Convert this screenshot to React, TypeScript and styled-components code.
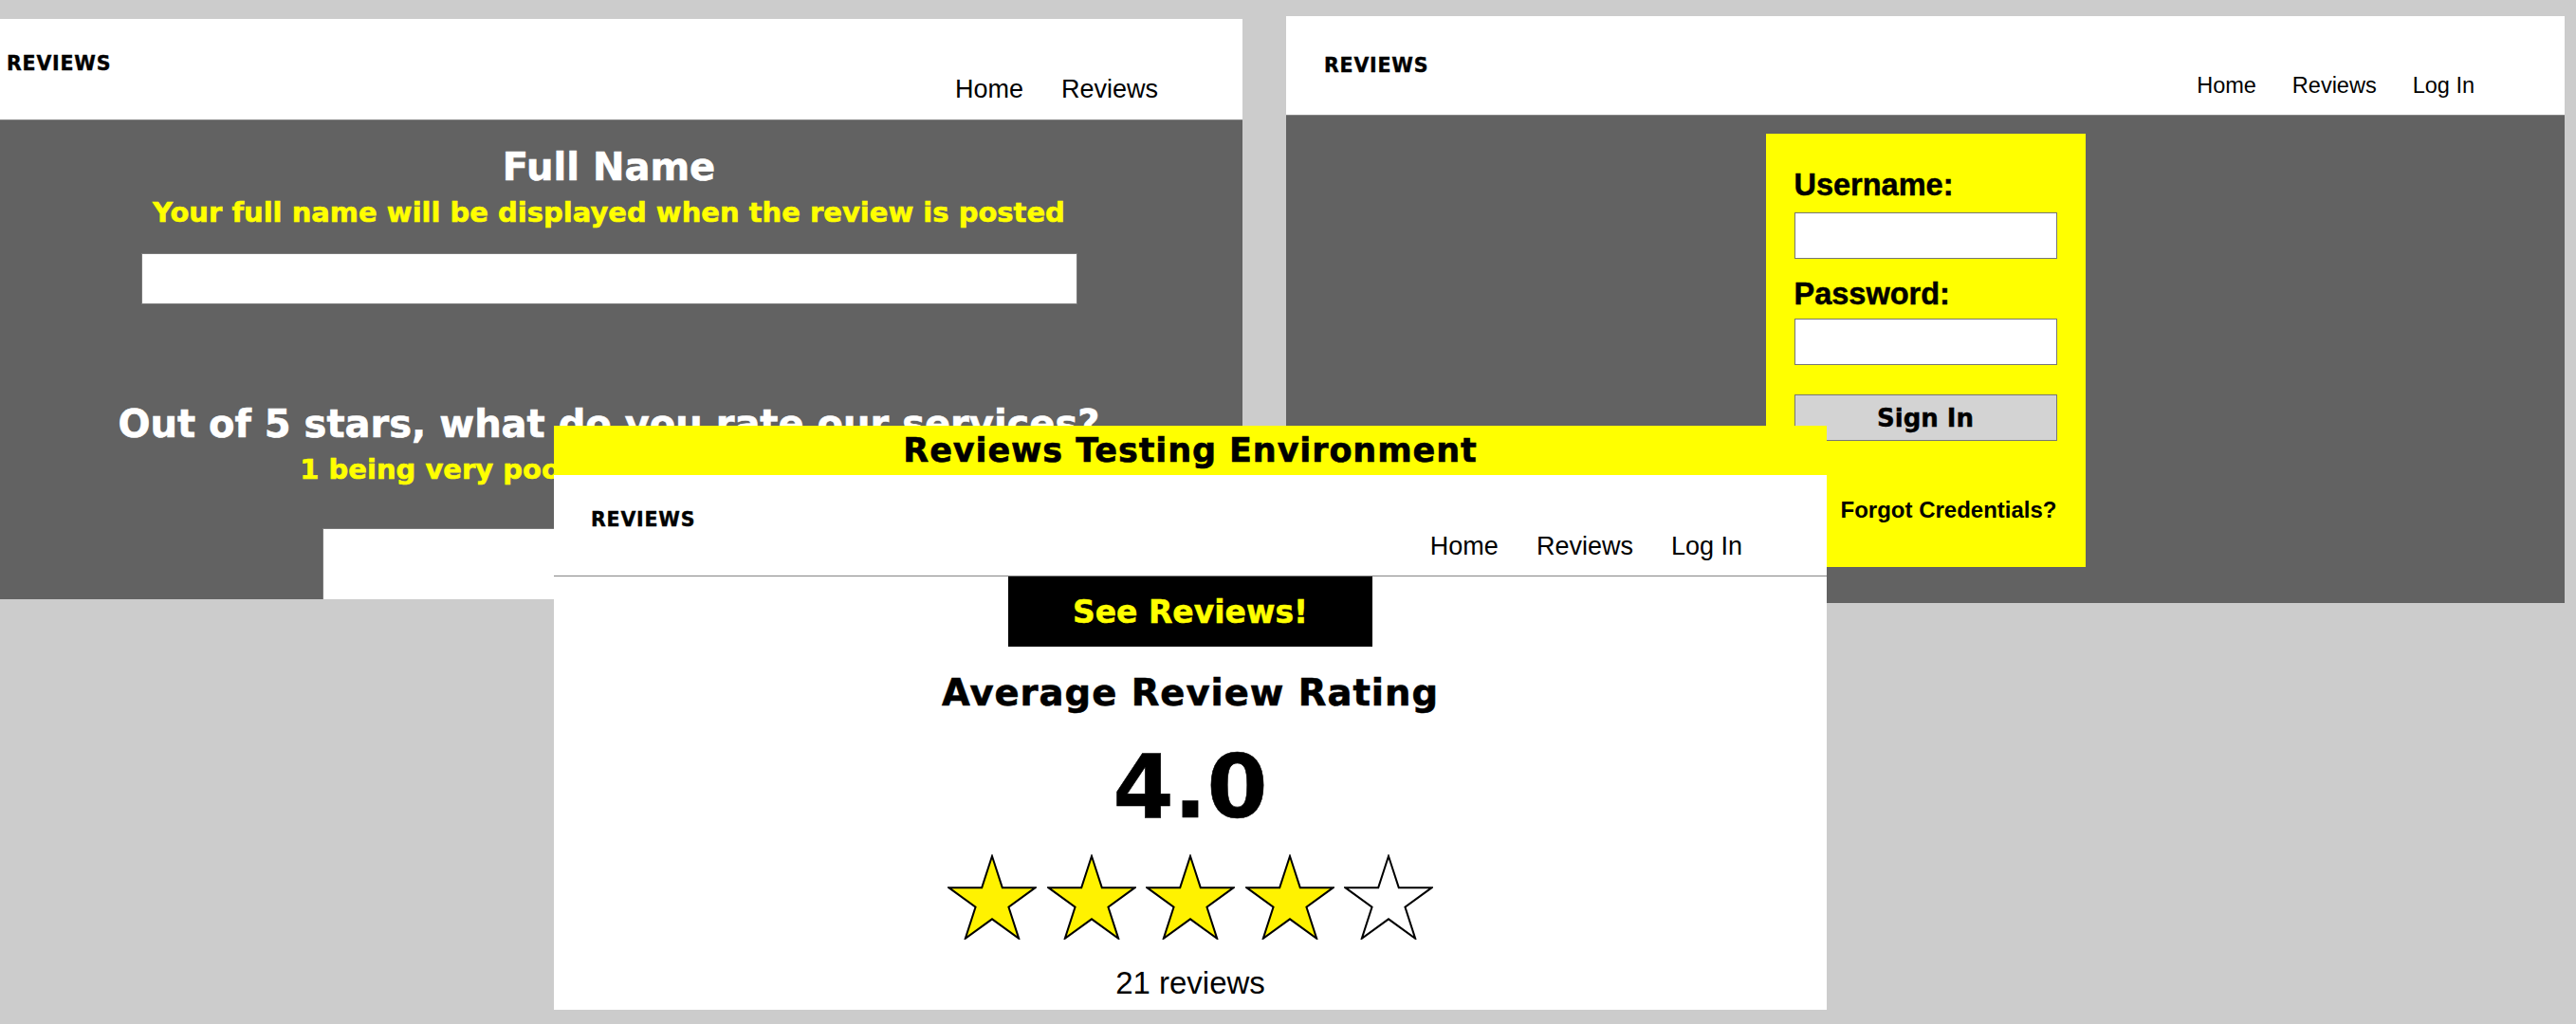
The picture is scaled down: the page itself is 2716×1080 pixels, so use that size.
import React from "react";
import styled, { createGlobalStyle } from "styled-components";

const HEAVY = `"DejaVu Sans", "Liberation Sans", Arial, sans-serif`;
const SANS = `"Liberation Sans", Arial, sans-serif`;

const Global = createGlobalStyle`
  html, body { margin: 0; padding: 0; background: #cccccc; }
  body { width: 2716px; height: 1080px; overflow: hidden; font-family: ${SANS}; }
  * { box-sizing: border-box; }
`;

const Desktop = styled.div`
  position: relative;
  width: 2716px;
  height: 1080px;
  background: #cccccc;
  overflow: hidden;
`;

const Win = styled.div<{ $x: number; $y: number; $w: number; $h: number }>`
  position: absolute;
  left: ${(p) => p.$x}px;
  top: ${(p) => p.$y}px;
  width: ${(p) => p.$w}px;
  height: ${(p) => p.$h}px;
  overflow: hidden;
  display: flex;
  flex-direction: column;
  background: #ffffff;
`;

const Banner = styled.div`
  flex: none;
  height: 52px;
  background: #ffff00;
  display: flex;
  align-items: center;
  justify-content: center;
  font-family: ${HEAVY};
  font-weight: 700;
  font-size: 35px;
  letter-spacing: 0.9px;
  -webkit-text-stroke: 0.6px #000;
  line-height: 1;
  color: #000;
  white-space: nowrap;
`;

const Header = styled.header<{ $h: number }>`
  flex: none;
  height: ${(p) => p.$h + 1}px;
  background: #ffffff;
  border-bottom: 1px solid #858585;
  display: flex;
  justify-content: space-between;
  align-items: flex-start;
`;

const Brand = styled.div<{ $top: number; $left: number }>`
  padding: ${(p) => p.$top}px 0 0 ${(p) => p.$left}px;
  font-family: ${HEAVY};
  font-weight: 700;
  font-size: 20.5px;
  letter-spacing: 0.8px;
  -webkit-text-stroke: 0.4px #000;
  line-height: 1;
  color: #000;
`;

const Nav = styled.nav<{ $top: number; $right: number; $size: number; $gap: number }>`
  display: flex;
  gap: ${(p) => p.$gap}px;
  padding: ${(p) => p.$top}px ${(p) => p.$right}px 0 0;
  font-family: ${SANS};
  font-size: ${(p) => p.$size}px;
  line-height: 1;
  color: #000;
  white-space: nowrap;
`;

const NavLink = styled.span`
  color: #000;
`;

const GreyPanel = styled.main<{ $padRight?: number; $padTop?: number }>`
  flex: 1;
  background: #626262;
  display: flex;
  flex-direction: column;
  align-items: center;
  padding-right: ${(p) => p.$padRight ?? 0}px;
  padding-top: ${(p) => p.$padTop ?? 0}px;
`;

const Heading = styled.h2<{ $size: number; $color: string; $mt: number; $ls?: number }>`
  margin: ${(p) => p.$mt}px 0 0;
  font-family: ${HEAVY};
  font-weight: 700;
  font-size: ${(p) => p.$size}px;
  letter-spacing: ${(p) => p.$ls ?? 0}px;
  -webkit-text-stroke: 0.6px ${(p) => p.$color};
  line-height: 1;
  color: ${(p) => p.$color};
  white-space: nowrap;
  text-align: center;
`;

const WideField = styled.div<{ $w: number; $h: number; $mt: number }>`
  flex: none;
  width: ${(p) => p.$w}px;
  height: ${(p) => p.$h}px;
  margin-top: ${(p) => p.$mt}px;
  background: #ffffff;
  border: 1px solid #7a7a7a;
`;

const Card = styled.form`
  width: 337px;
  height: 457px;
  background: #ffff00;
  padding: 38px 30px 0 30px;
  display: flex;
  flex-direction: column;
`;

const Label = styled.label<{ $mt: number; $mb: number }>`
  margin: ${(p) => p.$mt}px 0 ${(p) => p.$mb}px;
  font-family: ${SANS};
  font-weight: 700;
  font-size: 32.5px;
  -webkit-text-stroke: 0.5px #000;
  line-height: 1;
  color: #000;
`;

const Field = styled.div`
  width: 100%;
  height: 49px;
  background: #ffffff;
  border: 1px solid #767676;
`;

const SignIn = styled.div`
  margin-top: 31px;
  width: 100%;
  height: 49px;
  background: #d3d3d3;
  border: 1px solid #767676;
  display: flex;
  align-items: center;
  justify-content: center;
  font-family: ${HEAVY};
  font-weight: 700;
  font-size: 26px;
  -webkit-text-stroke: 0.4px #000;
  line-height: 1;
  color: #000;
`;

const Forgot = styled.span`
  margin-top: 61px;
  align-self: flex-end;
  font-family: ${SANS};
  font-weight: 700;
  font-size: 24px;
  line-height: 1;
  color: #000;
  white-space: nowrap;
`;

const WhitePanel = styled.main`
  flex: 1;
  background: #ffffff;
  display: flex;
  flex-direction: column;
  align-items: center;
`;

const SeeButton = styled.div`
  width: 384px;
  height: 74px;
  background: #000;
  display: flex;
  align-items: center;
  justify-content: center;
  font-family: ${HEAVY};
  font-weight: 700;
  font-size: 33px;
  -webkit-text-stroke: 0.5px #ffff00;
  line-height: 1;
  color: #ffff00;
`;

const StarRow = styled.div`
  margin-top: 24px;
  display: flex;
  gap: 10.5px;
`;

const Count = styled.div`
  margin-top: 29px;
  font-family: ${SANS};
  font-size: 33px;
  line-height: 1;
  color: #000;
`;

const starPoints = (() => {
  const R = 48;
  const r = R * 0.382;
  const cx = 47;
  const cy = 50;
  const pts: string[] = [];
  for (let i = 0; i < 10; i++) {
    const a = (-90 + i * 36) * (Math.PI / 180);
    const rad = i % 2 === 0 ? R : r;
    pts.push(`${(cx + rad * Math.cos(a)).toFixed(2)},${(cy + rad * Math.sin(a)).toFixed(2)}`);
  }
  return pts.join(" ");
})();

const Star = ({ filled }: { filled: boolean }) => (
  <svg width="94" height="90" viewBox="0 0 94 90">
    <polygon points={starPoints} fill={filled ? "#fff200" : "#ffffff"} stroke="#000" strokeWidth="2" strokeLinejoin="miter" />
  </svg>
);

export default function App() {
  return (
    <>
      <Global />
      <Desktop>
        <Win $x={0} $y={20} $w={1310} $h={612}>
          <Header $h={106}>
            <Brand $top={37} $left={7}>REVIEWS</Brand>
            <Nav $top={61} $right={89} $size={27} $gap={40}>
              <NavLink>Home</NavLink>
              <NavLink>Reviews</NavLink>
            </Nav>
          </Header>
          <GreyPanel $padRight={26}>
            <Heading $size={40} $color="#ffffff" $mt={29}>Full Name</Heading>
            <Heading $size={29} $color="#ffff00" $mt={14}>
              Your full name will be displayed when the review is posted
            </Heading>
            <WideField $w={987} $h={54} $mt={28} />
            <Heading $size={40} $color="#ffffff" $mt={106}>
              Out of 5 stars, what do you rate our services?
            </Heading>
            <Heading $size={29} $color="#ffff00" $mt={14}>
              1 being very poor and 5 being excellent
            </Heading>
            <WideField $w={604} $h={90} $mt={47} />
          </GreyPanel>
        </Win>

        <Win $x={1356} $y={17} $w={1348} $h={619}>
          <Header $h={104}>
            <Brand $top={42} $left={40}>REVIEWS</Brand>
            <Nav $top={62} $right={95} $size={23.5} $gap={38}>
              <NavLink>Home</NavLink>
              <NavLink>Reviews</NavLink>
              <NavLink>Log In</NavLink>
            </Nav>
          </Header>
          <GreyPanel $padTop={19}>
            <Card>
              <Label $mt={0} $mb={12}>Username:</Label>
              <Field />
              <Label $mt={21} $mb={10}>Password:</Label>
              <Field />
              <SignIn>Sign In</SignIn>
              <Forgot>Forgot Credentials?</Forgot>
            </Card>
          </GreyPanel>
        </Win>

        <Win $x={584} $y={449} $w={1342} $h={616}>
          <Banner>Reviews Testing Environment</Banner>
          <Header $h={106}>
            <Brand $top={37} $left={39}>REVIEWS</Brand>
            <Nav $top={62} $right={89} $size={27} $gap={40}>
              <NavLink>Home</NavLink>
              <NavLink>Reviews</NavLink>
              <NavLink>Log In</NavLink>
            </Nav>
          </Header>
          <WhitePanel>
            <SeeButton>See Reviews!</SeeButton>
            <Heading $size={38.5} $color="#000000" $mt={30} $ls={1}>Average Review Rating</Heading>
            <Heading $size={92} $color="#000000" $mt={34}>4.0</Heading>
            <StarRow>
              {[1, 2, 3, 4, 5].map((i) => (
                <Star key={i} filled={i <= 4} />
              ))}
            </StarRow>
            <Count>21 reviews</Count>
          </WhitePanel>
        </Win>
      </Desktop>
    </>
  );
}
